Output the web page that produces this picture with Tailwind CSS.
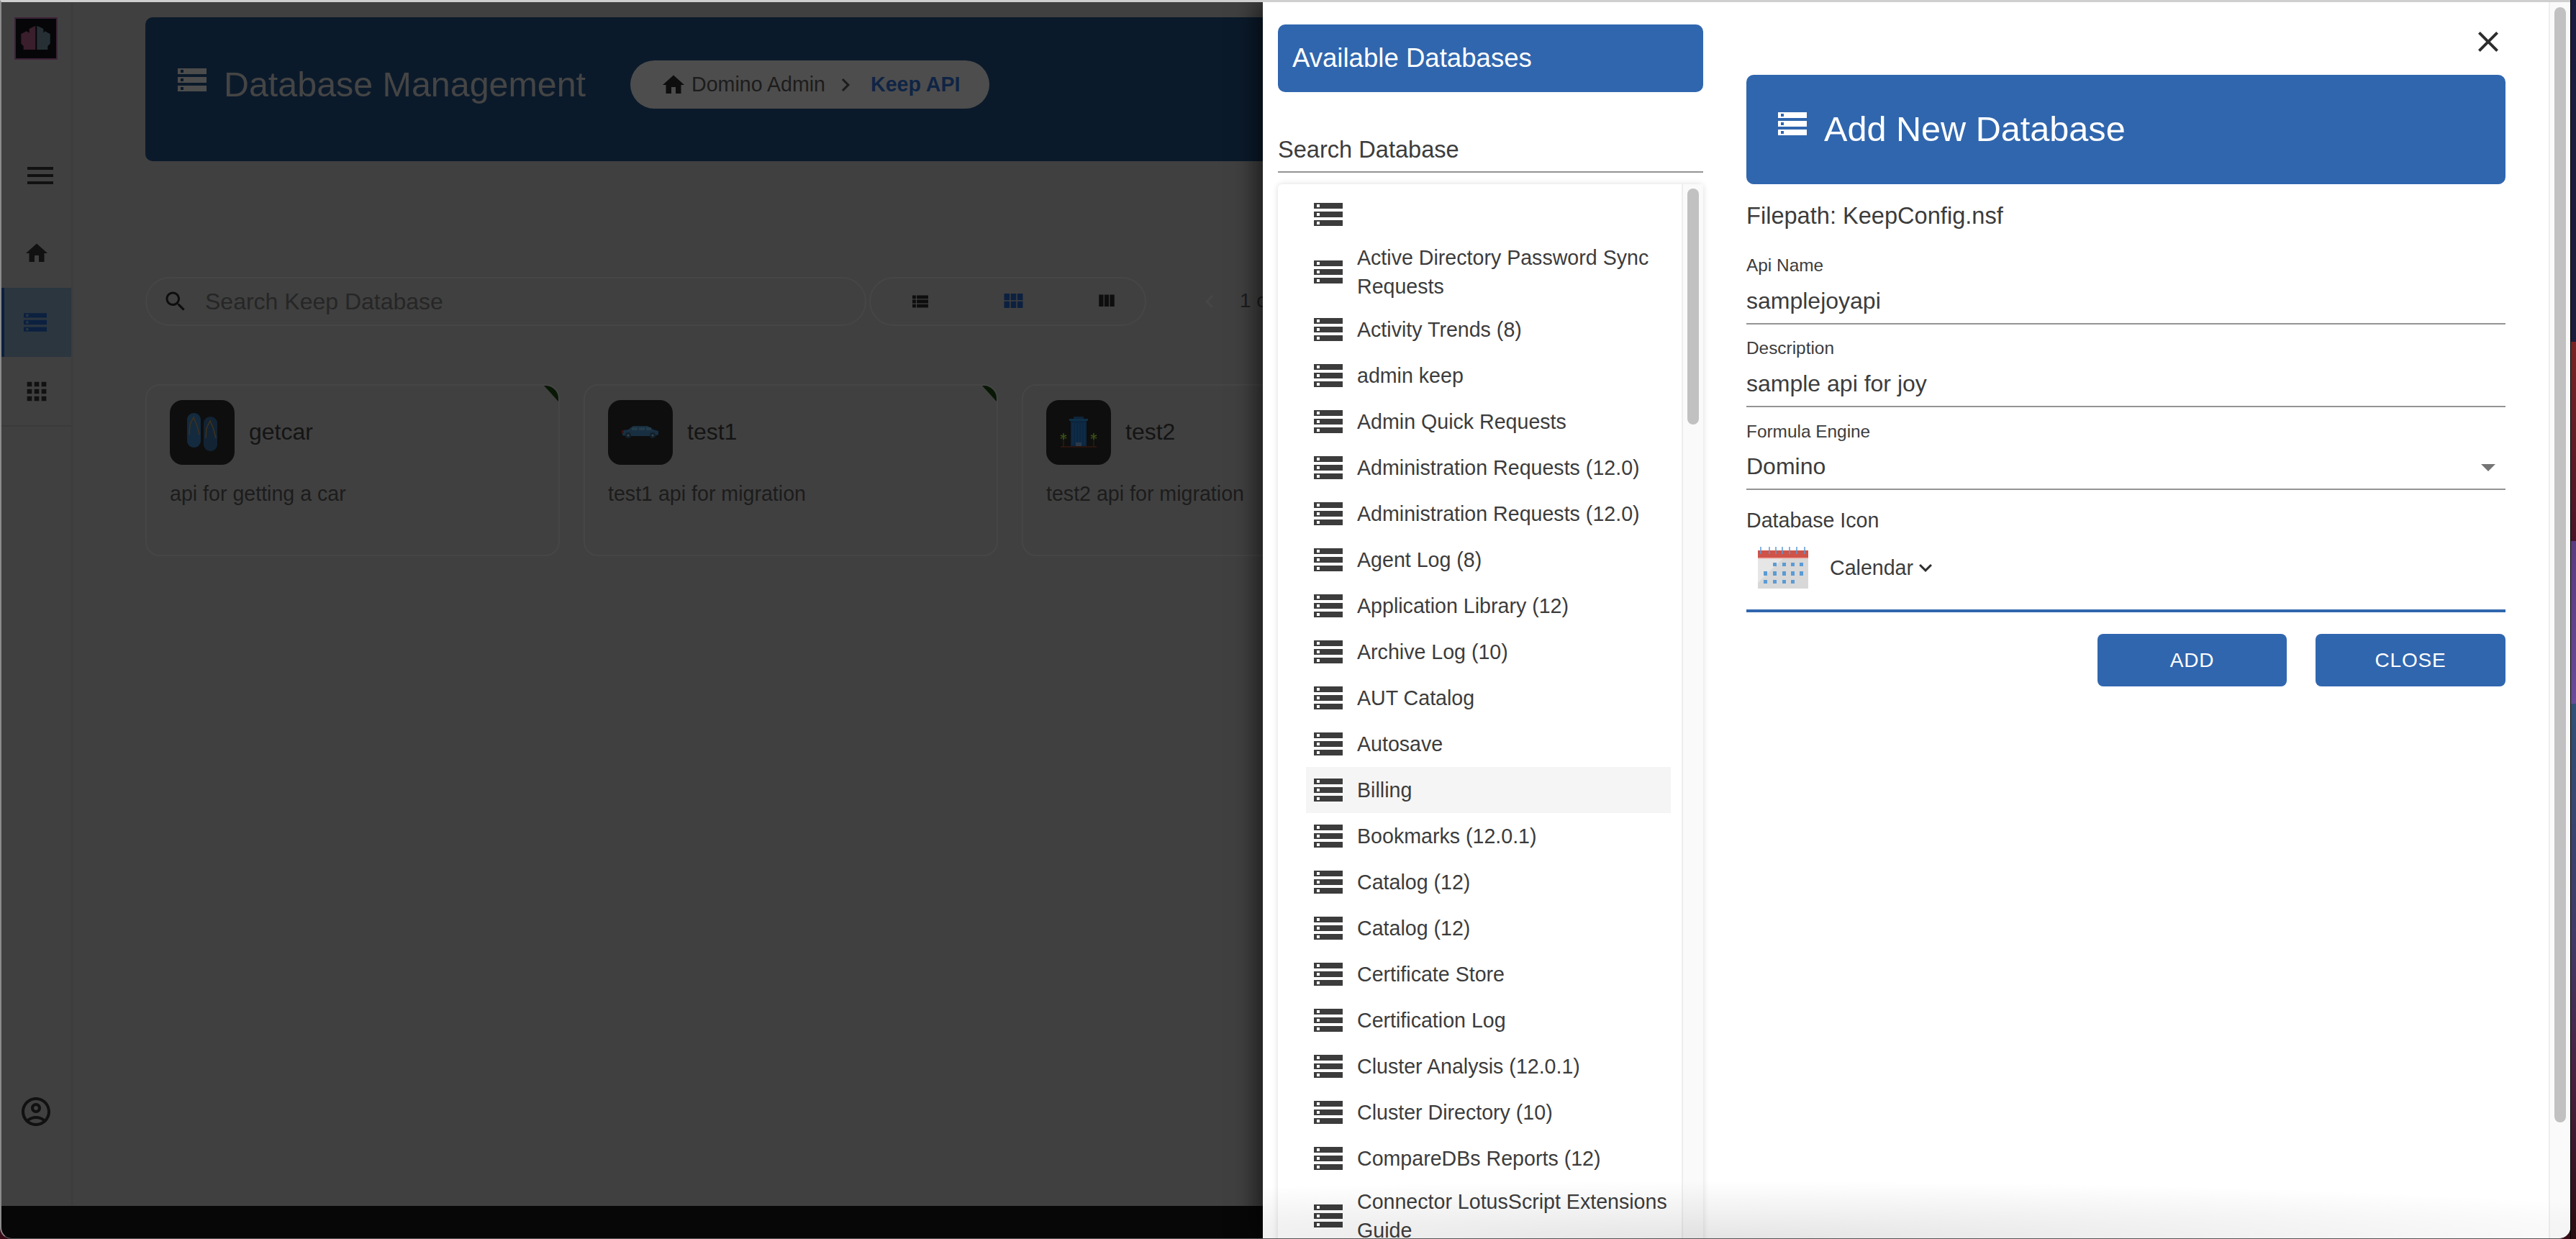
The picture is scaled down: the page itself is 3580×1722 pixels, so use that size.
<!DOCTYPE html>
<html lang="en">

<head>
    <meta charset="UTF-8" />
    <title>Database Management</title>
    <script src="https://cdn.jsdelivr.net/npm/@tailwindcss/browser@4"></script>
</head>

<body class="w-[3580px] h-[1722px] overflow-hidden flex bg-[#3a0c18] font-['Liberation_Sans',sans-serif]">

    <!-- app window -->
    <div class="relative w-[3572px] h-[1722px] shrink-0 flex flex-col overflow-hidden bg-[#070707] border-t-[3px] border-l-2 border-b border-t-[#cfcfcf] border-l-[#8c8c8c] border-b-[#555555] rounded-bl-[16px] rounded-br-[16px]">

        <div class="flex h-[1673px] shrink-0 bg-[#404040]">
            <!-- sidebar -->
            <aside class="relative w-[99px] shrink-0 border-r-2 border-[#3c3c3c] flex flex-col">
                <div class="pl-[18px] pt-[21px]">
                    <svg class="w-[60px] h-[59px]" viewBox="0 0 60 59">
                        <rect x="1" y="1" width="58" height="57" fill="#060608" stroke="#3c2236" stroke-width="2" />
                        <path d="M29.3 11.7L20.7 16v5.7l-4-2.4-7.4 4v13.4l3.4 3.3v5h16.6z" fill="#3a1e2c" />
                        <path d="M31.3 11.7l9 4.3v5.7l2-2.4 7.4 4v13.4l-3.4 3.3v5H31.3z" fill="#263034" />
                    </svg>
                </div>
                <div class="mt-[113px] h-[96px] pl-[30px] flex items-center">
                    <svg class="w-[48px] h-[48px] fill-[#111111]" viewBox="0 0 24 24"><path d="M3 18h18v-2H3v2zm0-5h18v-2H3v2zm0-7v2h18V6H3z" /></svg>
                </div>
                <div class="mt-[12px] h-[96px] pl-[31px] flex items-center">
                    <svg class="w-[36px] h-[36px] fill-[#111111]" viewBox="0 0 24 24"><path d="M10 20v-6h4v6h5v-8h3L12 3 2 12h3v8z" /></svg>
                </div>
                <div class="h-[96px] pl-[27px] flex items-center bg-[#2b363f] border-l-4 border-[#0b2040]">
                    <svg class="w-[32px] h-[26px] fill-[#0c2040]" viewBox="2 4 20 16"><path d="M2 20h20v-4H2v4zm2-3h2v2H4v-2zM2 4v4h20V4H2zm4 3H4V5h2v2zm-4 7h20v-4H2v4zm2-3h2v2H4v-2z" /></svg>
                </div>
                <div class="h-[97px] pl-[29px] flex items-center border-b-2 border-[#3a3a3a]">
                    <svg class="w-[40px] h-[40px] fill-[#111111]" viewBox="0 0 24 24"><path d="M4 8h4V4H4v4zm6 12h4v-4h-4v4zm-6 0h4v-4H4v4zm0-6h4v-4H4v4zm6 0h4v-4h-4v4zm6-10v4h4V4h-4zm-6 4h4V4h-4v4zm6 6h4v-4h-4v4zm0 6h4v-4h-4v4z" /></svg>
                </div>
                <div class="mt-auto pl-[24px] pb-[107px]">
                    <svg class="w-[48px] h-[48px] fill-[#111111]" viewBox="0 0 24 24"><path d="M12 2C6.48 2 2 6.48 2 12s4.48 10 10 10 10-4.48 10-10S17.52 2 12 2zM7.35 18.5C8.66 17.52 10.26 17 12 17s3.34.52 4.65 1.5C15.34 19.48 13.74 20 12 20s-3.34-.52-4.65-1.5zm10.79-1.38C16.45 15.8 14.32 15 12 15s-4.45.8-6.14 2.12C4.7 15.73 4 13.95 4 12c0-4.42 3.58-8 8-8s8 3.58 8 8c0 1.95-.7 3.73-1.86 5.12z" /><path d="M12 6c-1.93 0-3.5 1.57-3.5 3.5S10.07 13 12 13s3.5-1.57 3.5-3.5S13.93 6 12 6zm0 5c-.83 0-1.5-.67-1.5-1.5S11.17 8 12 8s1.5.67 1.5 1.5S12.83 11 12 11z" /></svg>
                </div>
            </aside>

            <!-- main -->
            <main class="flex-1 min-w-0 pl-[101px] pr-[40px] pt-[21px]">
                <header class="h-[200px] rounded-[10px] bg-[#0b1a2b] pl-[45px] pt-[60px]">
                    <div class="flex items-center h-[67px]">
                        <svg class="w-[40px] h-[32px] fill-[#4c4c4c] mb-[14px]" viewBox="2 4 20 16"><path d="M2 20h20v-4H2v4zm2-3h2v2H4v-2zM2 4v4h20V4H2zm4 3H4V5h2v2zm-4 7h20v-4H2v4zm2-3h2v2H4v-2z" /></svg>
                        <h1 class="ml-[24px] mt-[-2px] text-[48.4px] leading-[56px] text-[#454545]">Database Management</h1>
                        <div class="ml-[62px] w-[499px] h-[67px] rounded-full bg-[#4d4d4d] flex items-center pl-[42px]">
                            <svg class="w-[36px] h-[36px] fill-[#0e0e0e] shrink-0" viewBox="0 0 24 24"><path d="M10 20v-6h4v6h5v-8h3L12 3 2 12h3v8z" /></svg>
                            <span class="ml-[7px] text-[28.6px] text-[#1c1c1c]">Domino Admin</span>
                            <svg class="ml-[10px] w-[36px] h-[36px] fill-[#1c1c1c] shrink-0" viewBox="0 0 24 24"><path d="M8.59 16.59L13.17 12 8.59 7.41 10 6l6 6-6 6z" /></svg>
                            <span class="ml-[17px] text-[28.6px] font-bold text-[#0f2445]">Keep API</span>
                        </div>
                    </div>
                </header>

                <!-- toolbar -->
                <div class="mt-[161px] flex items-center gap-[4px] h-[68px]">
                    <div class="w-[1002px] h-[68px] rounded-full border-2 border-[#464646] flex items-center pl-[22px]">
                        <svg class="w-[36px] h-[36px] fill-[#0e0e0e]" viewBox="0 0 24 24"><path d="M15.5 14h-.79l-.28-.27C15.41 12.59 16 11.11 16 9.5 16 5.91 13.09 3 9.5 3S3 5.91 3 9.5 5.91 16 9.5 16c1.61 0 3.09-.59 4.23-1.57l.27.28v.79l5 4.99L20.49 19l-4.99-5zm-6 0C7.01 14 5 11.99 5 9.5S7.01 5 9.5 5 14 7.01 14 9.5 11.99 14 9.5 14z" /></svg>
                        <span class="ml-[23px] text-[32px] text-[#262626]">Search Keep Database</span>
                    </div>
                    <div class="w-[385px] h-[68px] rounded-full border-2 border-[#464646] flex items-center">
                        <svg class="ml-[58px] w-[22px] h-[22px] fill-[#0e0e0e]" viewBox="3 3 18 18"><path d="M3 14h4v-4H3v4zm0 5h4v-4H3v4zM3 9h4V5H3v4zm5 5h13v-4H8v4zm0 5h13v-4H8v4zM8 5v4h13V5H8z" /></svg>
                        <svg class="ml-[104px] w-[29px] h-[29px] fill-[#0c2040]" viewBox="3 3 19 19"><path d="M4 11h5V5H4v6zm0 7h5v-6H4v6zm6 0h5v-6h-5v6zm6 0h5v-6h-5v6zm-6-7h5V5h-5v6zm6-6v6h5V5h-5z" /></svg>
                        <svg class="ml-[103px] w-[24px] h-[24px] fill-[#0e0e0e]" viewBox="3 3 19 19"><path d="M10 18h5V5h-5v13zm-6 0h5V5H4v13zM16 5v13h5V5h-5z" /></svg>
                    </div>
                    <svg class="ml-[66px] w-[36px] h-[36px] fill-[#464646]" viewBox="0 0 24 24"><path d="M15.41 16.59L10.83 12l4.58-4.59L14 6l-6 6 6 6z" /></svg>
                    <span class="ml-[20px] text-[28px] text-[#1c1c1c] mt-[-2px]">1 of 1</span>
                </div>

                <!-- cards -->
                <div class="mt-[81px] flex gap-[33px]">
                    <section class="relative w-[576px] h-[239px] shrink-0 rounded-[20px] border-2 border-[#464646] overflow-hidden pl-[32px] pt-[20px]">
                        <div class="absolute top-0 right-0 w-[20px] h-[22px] bg-[#081805] [clip-path:polygon(0_0,100%_0,100%_100%)]"></div>
                        <div class="flex items-center">
                            <div class="w-[90px] h-[90px] rounded-[18px] bg-[#0e0e0e] flex items-center justify-center">
                                <svg class="w-[44px] h-[54px]" viewBox="0 0 44 54">
                                    <rect x="1" y="0" width="19" height="48" rx="9" fill="#142a3e" />
                                    <rect x="24" y="5" width="19" height="48" rx="9" fill="#122334" />
                                    <path d="M4 30 L5 16 L10 6 L15 18 L18 30" fill="none" stroke="#40321a" stroke-width="1.5" />
                                    <path d="M27 35 L28 21 L33 11 L38 23 L41 35" fill="none" stroke="#40321a" stroke-width="1.5" />
                                </svg>
                            </div>
                            <span class="ml-[20px] mb-[3px] text-[32px] text-[#141414]">getcar</span>
                        </div>
                        <p class="mt-[22px] text-[28.6px] leading-[36px] text-[#1c1c1c]">api for getting a car</p>
                    </section>
                    <section class="relative w-[576px] h-[239px] shrink-0 rounded-[20px] border-2 border-[#464646] overflow-hidden pl-[32px] pt-[20px]">
                        <div class="absolute top-0 right-0 w-[20px] h-[22px] bg-[#081805] [clip-path:polygon(0_0,100%_0,100%_100%)]"></div>
                        <div class="flex items-center">
                            <div class="w-[90px] h-[90px] rounded-[18px] bg-[#0e0e0e] flex items-center justify-center">
                                <svg class="w-[52px] h-[18px]" viewBox="0 0 52 18">
                                    <path d="M1 8 L2 6 L9 5 L16 0 L36 0 L44 5 L51 7 L51 12 L46 14 L8 14 L1 13z" fill="#182f42" />
                                    <rect x="14" y="2" width="8" height="4" fill="#243c4a" /><rect x="24" y="2" width="8" height="4" fill="#243c4a" /><rect x="34" y="2" width="7" height="4" fill="#243c4a" />
                                    <rect x="0" y="6" width="3" height="4" fill="#401212" />
                                    <circle cx="9" cy="13" r="4" fill="#12202a" /><circle cx="43" cy="13" r="4" fill="#12202a" />
                                    <circle cx="9" cy="13" r="1.5" fill="#324450" /><circle cx="43" cy="13" r="1.5" fill="#324450" />
                                </svg>
                            </div>
                            <span class="ml-[20px] mb-[3px] text-[32px] text-[#141414]">test1</span>
                        </div>
                        <p class="mt-[22px] text-[28.6px] leading-[36px] text-[#1c1c1c]">test1 api for migration</p>
                    </section>
                    <section class="relative w-[576px] h-[239px] shrink-0 rounded-[20px] border-2 border-[#464646] overflow-hidden pl-[32px] pt-[20px]">
                        <div class="flex items-center">
                            <div class="w-[90px] h-[90px] rounded-[18px] bg-[#0e0e0e] flex items-center justify-center">
                                <svg class="w-[52px] h-[44px]" viewBox="0 0 52 44">
                                    <rect x="19" y="0" width="14" height="4" fill="#0e2438" />
                                    <rect x="13" y="3" width="26" height="3" fill="#0e3048" />
                                    <rect x="15" y="6" width="22" height="36" fill="#0c2640" />
                                    <path d="M18 9v30M22 9v30M26 9v30M30 9v30M34 9v30" stroke="#12324e" stroke-width="1" />
                                    <rect x="22" y="36" width="8" height="6" fill="#2a3a4a" />
                                    <path d="M1 42h50" stroke="#2a140e" stroke-width="2" />
                                    <path d="M5 26v16M47 26v16" stroke="#2a2a12" stroke-width="1" />
                                    <path d="M1 26l8 4M9 26l-8 4M5 23v9M43 26l8 4M51 26l-8 4M47 23v9" stroke="#3e5416" stroke-width="1.5" />
                                </svg>
                            </div>
                            <span class="ml-[20px] mb-[3px] text-[32px] text-[#141414]">test2</span>
                        </div>
                        <p class="mt-[22px] text-[28.6px] leading-[36px] text-[#1c1c1c]">test2 api for migration</p>
                    </section>
                </div>
            </main>
        </div>

        <!-- modal -->
        <div class="absolute left-[1753px] top-0 bottom-0 right-0 bg-white flex shadow-[-10px_0_30px_rgba(0,0,0,0.55)]">
            <!-- available databases -->
            <div class="ml-[21px] w-[591px] shrink-0 pt-[31px]">
                <div class="h-[94px] rounded-[10px] bg-[#3066ae] flex items-center pl-[20px] text-[36.6px] text-white">Available Databases</div>
                <div class="mt-[60px] h-[52px] pb-[10px] flex items-center border-b-2 border-[#949494] text-[32.6px] text-[#3c3c3c]">Search Database</div>
                <div class="mt-[16px] h-[1500px] flex rounded-t-[6px] shadow-[0_0_8px_rgba(0,0,0,0.14)]">
                    <ul id="dbList" class="flex-1 pt-[10px] pl-[39px] pr-[15px]"></ul>
                    <div class="w-[30px] shrink-0 bg-[#fafafa] border-l-2 border-[#eeeeee] pl-[6px] pt-[6px]">
                        <div class="w-[16px] h-[328px] rounded-full bg-[#c1c1c1]"></div>
                    </div>
                </div>
            </div>

            <!-- add new database -->
            <div class="ml-[60px] w-[1055px] shrink-0 pt-[31px]">
                <div class="flex justify-end">
                    <svg class="w-[48px] h-[48px] fill-[#2e2e2e]" viewBox="0 0 24 24"><path d="M19 6.41L17.59 5 12 10.59 6.41 5 5 6.41 10.59 12 5 17.59 6.41 19 12 13.41 17.59 19 19 17.59 13.41 12z" /></svg>
                </div>
                <div class="mt-[22px] h-[152px] rounded-[10px] bg-[#3066ae] flex items-start pl-[44px] pt-[52px]">
                    <svg class="w-[40px] h-[32px] fill-white shrink-0" viewBox="2 4 20 16"><path d="M2 20h20v-4H2v4zm2-3h2v2H4v-2zM2 4v4h20V4H2zm4 3H4V5h2v2zm-4 7h20v-4H2v4zm2-3h2v2H4v-2z" /></svg>
                    <h2 class="ml-[24px] mt-[-5px] text-[48.6px] leading-[56px] text-white">Add New Database</h2>
                </div>
                <p class="mt-[24px] text-[32.6px] leading-[40px] text-[#3c3c3c]">Filepath: KeepConfig.nsf</p>

                <div class="mt-[34px]">
                    <div class="h-[30px] text-[24.4px] leading-[30px] text-[#3c3c3c]">Api Name</div>
                    <div class="h-[67px] pb-[11px] flex items-end border-b-2 border-[#949494] text-[32px] leading-[40px] text-[#3c3c3c]">samplejoyapi</div>
                </div>
                <div class="mt-[18px]">
                    <div class="h-[30px] text-[24.4px] leading-[30px] text-[#3c3c3c]">Description</div>
                    <div class="h-[67px] pb-[11px] flex items-end border-b-2 border-[#949494] text-[32px] leading-[40px] text-[#3c3c3c]">sample api for joy</div>
                </div>
                <div class="mt-[19px]">
                    <div class="h-[30px] text-[24.4px] leading-[30px] text-[#3c3c3c]">Formula Engine</div>
                    <div class="h-[66px] pb-[11px] flex items-end justify-between border-b-2 border-[#949494] text-[32px] leading-[40px] text-[#3c3c3c]">
                        <span>Domino</span>
                        <svg class="w-[48px] h-[48px] fill-[#757575] mb-[-5px]" viewBox="0 0 24 24"><path d="M7 10l5 5 5-5z" /></svg>
                    </div>
                </div>
                <div class="mt-[24px] h-[36px] text-[28.6px] leading-[36px] text-[#3c3c3c]">Database Icon</div>
                <div class="h-[110px] pb-[10px] pl-[16px] flex items-center border-b-4 border-[#3066ae]">
                    <svg class="w-[70px] h-[58px] shrink-0" viewBox="0 0 70 58">
                        <rect x="0" y="5" width="70" height="53" fill="#dcdcdc" />
                        <path d="M0 50 L36 15 L70 15 L70 58 L0 58z" fill="#d8d8d8" />
                        <path d="M0 15 L36 15 L0 50z" fill="#e6e6e6" />
                        <rect x="0" y="5" width="70" height="10" fill="#cf5349" />
                        <rect x="0" y="15" width="70" height="1.5" fill="#eea79f" />
                        <path d="M4 0v10M16 0v10M25 0v10M34 0v10M44 0v10M54 0v10M65 0v10" stroke="#5b9bd5" stroke-width="1.5" />
                        <path d="M21 22h5v5h-5zM34 22h5v5h-5zM46 22h5v5h-5zM58 22h5v5h-5z" fill="#5b9bd5" />
                        <path d="M8 34h5v6H8zM21 34h5v6h-5zM34 34h5v6h-5zM46 34h5v6h-5zM58 34h5v6h-5z" fill="#5b9bd5" />
                        <path d="M8 46h5v5H8zM21 46h5v5h-5zM34 46h5v5h-5zM46 46h5v5h-5z" fill="#5b9bd5" />
                    </svg>
                    <span class="ml-[30px] text-[28.6px] text-[#3c3c3c]">Calendar</span>
                    <svg class="w-[36px] h-[36px] fill-[#2e2e2e] ml-[-1px]" viewBox="0 0 24 24"><path d="M7.41 8.59 12 13.17l4.59-4.58L18 10l-6 6-6-6z" /></svg>
                </div>
                <div class="mt-[30px] flex justify-end gap-[40px]">
                    <button class="w-[263px] h-[73px] rounded-[8px] bg-[#3066ae] text-[28px] text-white tracking-[0.8px]">ADD</button>
                    <button class="w-[264px] h-[73px] rounded-[8px] bg-[#3066ae] text-[28px] text-white tracking-[0.8px]">CLOSE</button>
                </div>
            </div>

            <!-- page scrollbar -->
            <div class="ml-auto w-[30px] shrink-0 bg-[#fafafa] border-l-2 border-[#eeeeee] pl-[6px] pt-[7px]">
                <div class="w-[16px] h-[1550px] rounded-full bg-[#c1c1c1]"></div>
            </div>

            <!-- soft shadow at the bottom of the screen -->
            <div class="absolute left-0 right-0 bottom-0 h-[90px] pointer-events-none bg-[radial-gradient(ellipse_1500px_80px_at_650px_100%,rgba(0,0,0,0.1),transparent)]"></div>
        </div>
    </div>

    <!-- desktop wallpaper showing at the right edge -->
    <div class="w-[8px] h-[1722px] shrink-0 border-l border-black bg-[linear-gradient(to_bottom,#1a1c40_0,#1c1c3c_475px,#7a2424_475px,#4a1428_752px,#5a3a80_752px,#6a4a9a_978px,#305078_978px,#403a68_1300px,#4a2040_1500px,#2a0c10_1722px)]"></div>

    <script>
        const databases = [
            "", "Active Directory Password Sync Requests", "Activity Trends (8)", "admin keep", "Admin Quick Requests",
            "Administration Requests (12.0)", "Administration Requests (12.0)", "Agent Log (8)", "Application Library (12)",
            "Archive Log (10)", "AUT Catalog", "Autosave", "Billing", "Bookmarks (12.0.1)", "Catalog (12)", "Catalog (12)",
            "Certificate Store", "Certification Log", "Cluster Analysis (12.0.1)", "Cluster Directory (10)",
            "CompareDBs Reports (12)", "Connector LotusScript Extensions Guide"
        ];

        document.getElementById("dbList").innerHTML = databases.map(name => `
            <li class="flex items-center py-[8px] pl-[11px] ${name === "Billing" ? "bg-[#f5f5f5]" : ""}">
                <svg class="w-[40px] h-[32px] fill-[#3c3c3c] shrink-0" viewBox="2 4 20 16"><path d="M2 20h20v-4H2v4zm2-3h2v2H4v-2zM2 4v4h20V4H2zm4 3H4V5h2v2zm-4 7h20v-4H2v4zm2-3h2v2H4v-2z" /></svg>
                <span class="ml-[20px] min-h-[48px] flex items-center text-[28.6px] leading-[40px] text-[#3c3c3c]">${name}</span>
            </li>
        `).join("");
    </script>
</body>

</html>
